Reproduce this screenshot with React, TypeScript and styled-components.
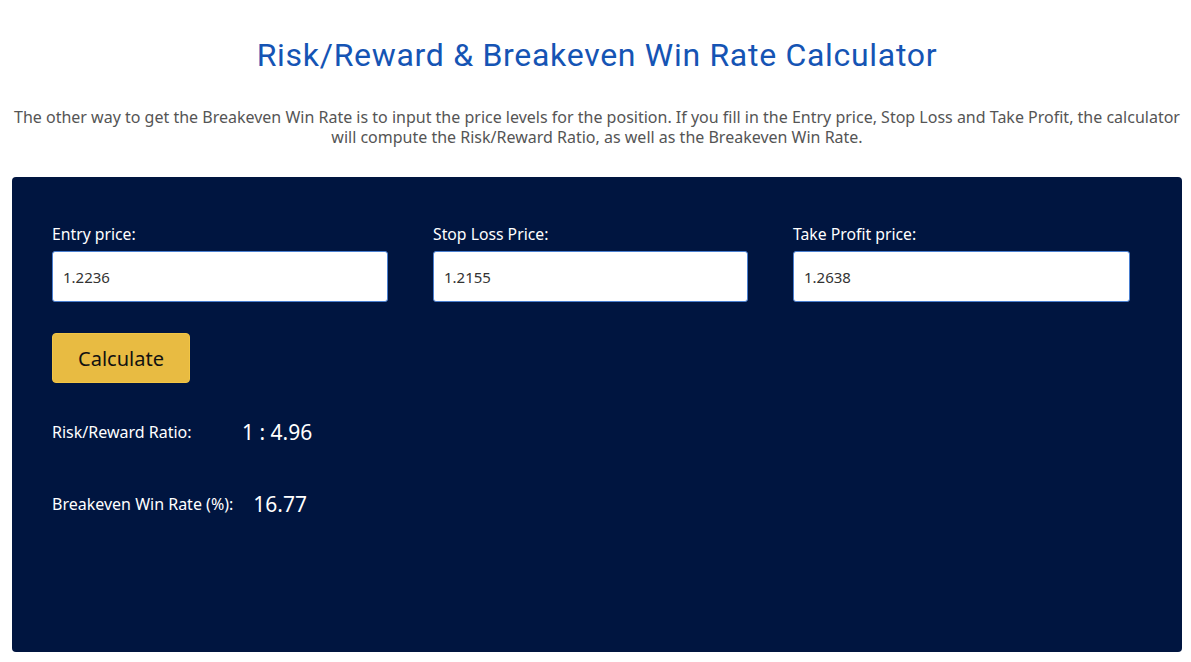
import React from "react";
import styled, { createGlobalStyle } from "styled-components";

const GlobalStyle = createGlobalStyle`
  body {
    margin: 0;
    background: #ffffff;
    font-family: "Noto Sans", "Open Sans", sans-serif;
  }
`;

const Page = styled.div`
  padding: 0 9px 10px 12px;
`;

const Title = styled.h1`
  margin: 0;
  padding-top: 36px;
  text-align: center;
  font-family: "Roboto", "Inter", sans-serif;
  font-weight: 400;
  font-size: 32px;
  letter-spacing: 0.7px;
  line-height: 38px;
  color: #1554b4;
`;

const Intro = styled.p`
  margin: 33px -4px 0 -4px;
  text-align: center;
  font-size: 16px;
  line-height: 20px;
  color: #555555;
`;

const Panel = styled.section`
  margin-top: 30px;
  height: 475px;
  box-sizing: border-box;
  padding: 46px 40px 0;
  background: #001540;
  border-radius: 4px;
`;

const Fields = styled.div`
  display: grid;
  grid-template-columns: 336px 315px 337px;
  column-gap: 45px;
`;

const Field = styled.label`
  display: flex;
  flex-direction: column;
`;

const FieldLabel = styled.span`
  font-size: 15.75px;
  line-height: 22px;
  color: #ffffff;
  margin-bottom: 6px;
`;

const Input = styled.input`
  box-sizing: border-box;
  height: 51px;
  width: 100%;
  padding: 0 10px;
  border: 1px solid #4a7fd0;
  border-radius: 3px;
  background: #ffffff;
  font-family: inherit;
  font-size: 15px;
  color: #333333;
  outline: none;
`;

const Button = styled.button`
  display: block;
  margin-top: 31px;
  width: 138px;
  height: 50px;
  border: 1px solid #f2c544;
  border-radius: 4px;
  background: #e8bb42;
  font-family: inherit;
  font-size: 20px;
  color: #111111;
  cursor: pointer;
`;

const ResultRow = styled.div<{ $top: number }>`
  display: flex;
  align-items: center;
  margin-top: ${(p) => p.$top}px;
`;

const ResultLabel = styled.span`
  min-width: 170px;
  margin-right: 20px;
  font-size: 16px;
  color: #ffffff;
`;

const ResultValue = styled.span`
  font-size: 21px;
  color: #ffffff;
`;

const fields = [
  { label: "Entry price:", value: "1.2236" },
  { label: "Stop Loss Price:", value: "1.2155" },
  { label: "Take Profit price:", value: "1.2638" },
];

const App: React.FC = () => {
  return (
    <Page>
      <GlobalStyle />
      <Title>Risk/Reward &amp; Breakeven Win Rate Calculator</Title>
      <Intro>
        The other way to get the Breakeven Win Rate is to input the price levels for the
        position. If you fill in the Entry price, Stop Loss and Take Profit, the calculator
        will compute the Risk/Reward Ratio, as well as the Breakeven Win Rate.
      </Intro>
      <Panel>
        <Fields>
          {fields.map((f) => (
            <Field key={f.label}>
              <FieldLabel>{f.label}</FieldLabel>
              <Input type="text" defaultValue={f.value} />
            </Field>
          ))}
        </Fields>
        <Button>Calculate</Button>
        <ResultRow $top={35}>
          <ResultLabel>Risk/Reward Ratio:</ResultLabel>
          <ResultValue>1 : 4.96</ResultValue>
        </ResultRow>
        <ResultRow $top={44}>
          <ResultLabel>Breakeven Win Rate (%):</ResultLabel>
          <ResultValue>16.77</ResultValue>
        </ResultRow>
      </Panel>
    </Page>
  );
};

export default App;
